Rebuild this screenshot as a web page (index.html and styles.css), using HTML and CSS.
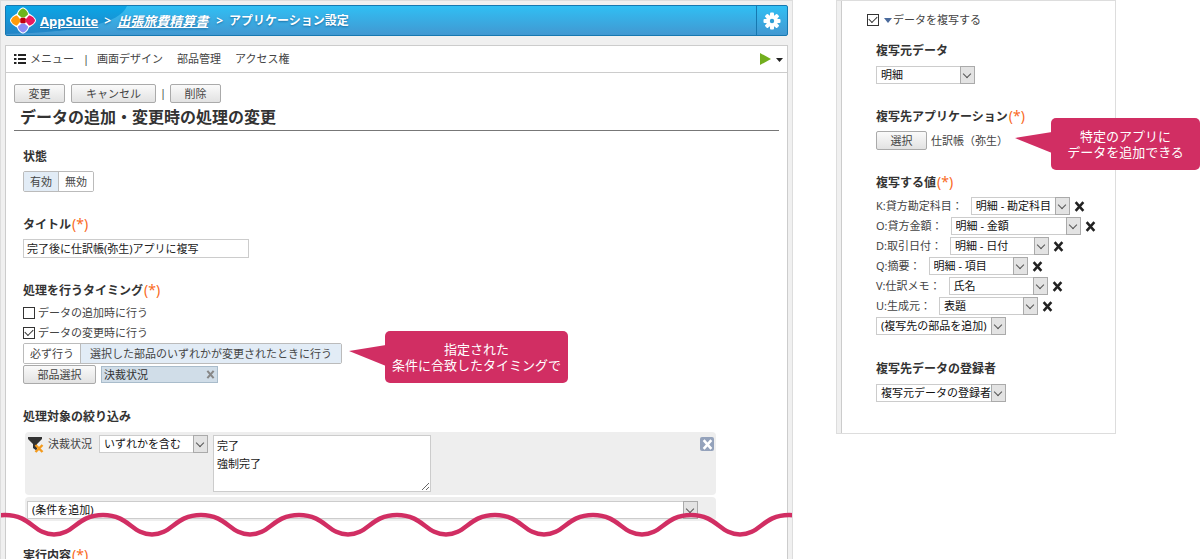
FILE: index.html
```html
<!DOCTYPE html>
<html lang="ja">
<head>
<meta charset="utf-8">
<title>AppSuite - アプリケーション設定</title>
<link rel="stylesheet" href="styles.css">
</head>
<body>
<svg class="defs" aria-hidden="true">
  <symbol id="cross" viewBox="0 0 10 10"><path d="M1.500 1L8.500 9M8.500 1L1.500 9" fill="none" stroke="currentColor" stroke-width="2.300"/></symbol>
</svg>
<div class="page">
  <main class="app">
    <header class="bar">
      <svg class="swoosh" viewBox="0 0 125 29" aria-hidden="true"><defs><linearGradient id="sw" x1="0" y1="0" x2="0" y2="1"><stop offset="0" stop-color="#0aa6e6"/><stop offset="1" stop-color="#2384c6"/></linearGradient></defs><path d="M0 0H121C114 18 72 26 0 28Z" fill="url(#sw)"/></svg>
      <svg class="logo" viewBox="0 0 26 27" aria-hidden="true">
        <path d="M13 .5C15 .5 18 3 19 6.500C23 8.500 26 11.500 26 13.500S23 18.500 19 20.500C18 24 15 26.500 13 26.500S8 24 7 20.500C3 18.500 0 15.500 0 13.500S3 8.500 7 6.500C8 3 11 .5 13 .5Z" fill="#fff"/>
        <path d="M13 1.500C15.500 2 18 5 18 7.500L14.500 10.500H11.500L8 7.500C8 5 10.500 2 13 1.500Z" fill="#6cb51d"/>
        <path d="M1 13.500C1.500 11 4.500 8.500 7 8.500L10 12V15L7 18.500C4.500 18.500 1.500 16 1 13.500Z" fill="#ff9b0b"/>
        <path d="M25 13.500C24.500 11 21.500 8.500 19 8.500L16 12V15L19 18.500C21.500 18.500 24.500 16 25 13.500Z" fill="#e8185f"/>
        <path d="M13 25.500C15.500 25 18 22 18 19.500L14.500 16.500H11.500L8 19.500C8 22 10.500 25 13 25.500Z" fill="#8c8cf5"/>
        <rect x="10.200" y="10.700" width="5.600" height="5.600" rx="1.500" fill="#c2000d"/>
      </svg>
      <nav class="crumbs"><a class="root" href="#">AppSuite</a><span>&gt;</span><a class="doc" href="#">出張旅費精算書</a><span class="next">&gt;</span><span>アプリケーション設定</span></nav>
      <button class="gear" type="button" aria-label="設定">
        <svg viewBox="-9 -9 18 18" width="18" height="18" aria-hidden="true"><g fill="#fff"><g id="teeth"><rect x="-2" y="-8.500" width="4" height="17" rx="1"/><rect x="-8.500" y="-2" width="17" height="4" rx="1"/></g><use href="#teeth" transform="rotate(45)"/><circle r="6"/></g><circle r="2.200" fill="#2e9fd6"/></svg>
      </button>
    </header>

    <div class="sheet">
      <div class="toolbar">
        <a class="menu" href="#"><svg width="12" height="10" viewBox="0 0 12 10" aria-hidden="true"><path d="M0 1H2.500M0 5H2.500M0 9H2.500M4 1H12M4 5H12M4 9H12" stroke="#222" stroke-width="2"/></svg>メニュー</a>
        <span class="sep">|</span>
        <a href="#">画面デザイン</a><a href="#">部品管理</a><a href="#">アクセス権</a>
        <button class="run" type="button" aria-label="実行"><svg width="23" height="12" viewBox="0 0 23 12" aria-hidden="true"><path d="M0 0L11 6L0 12Z" fill="#72ae1e"/><path d="M16 5H23L19.500 9Z" fill="#222"/></svg></button>
      </div>

      <div class="content">
        <div class="actions">
          <button class="btn" type="button">変更</button>
          <button class="btn long" type="button">キャンセル</button>
          <span class="sep">|</span>
          <button class="btn" type="button">削除</button>
        </div>
        <h1>データの追加・変更時の処理の変更</h1>

        <div class="form">
          <section>
            <h2>状態</h2>
            <div class="toggle"><button class="on" type="button">有効</button><button type="button">無効</button></div>
          </section>
          <section>
            <h2><label for="title">タイトル</label><span class="req">(*)</span></h2>
            <input id="title" class="text" type="text" value="完了後に仕訳帳(弥生)アプリに複写">
          </section>
          <section class="timing">
            <h2>処理を行うタイミング<span class="req">(*)</span></h2>
            <label class="check"><input type="checkbox">データの追加時に行う</label>
            <label class="check"><input type="checkbox" checked>データの変更時に行う</label>
            <div class="anchor">
              <div class="toggle wide"><button type="button">必ず行う</button><button class="on" type="button">選択した部品のいずれかが変更されたときに行う</button></div>
              <div class="callout left"><svg width="37" height="22" viewBox="0 0 37 22" aria-hidden="true"><path d="M0 6L37 0V21Z" fill="#d12e63"/></svg>指定された<br>条件に合致したタイミングで</div>
            </div>
            <div class="parts">
              <button class="btn parts-btn" type="button">部品選択</button>
              <span class="chip">決裁状況<button type="button" aria-label="外す"><svg width="9" height="9"><use href="#cross"/></svg></button></span>
            </div>
          </section>
          <section class="filter">
            <h2>処理対象の絞り込み</h2>
            <div class="cond">
              <svg class="funnel" width="16" height="16" viewBox="0 0 16 16" aria-hidden="true"><path d="M0 0H14V2L9 7V14L5 11V7L0 2Z" fill="#333"/><path d="M7.500 8L14.500 15M14.500 8L7.500 15" stroke="#f39a1c" stroke-width="2.400"/></svg>
              <label for="op">決裁状況</label>
              <span class="select op"><select id="op"><option>いずれかを含む</option></select></span>
              <textarea aria-label="決裁状況の値">完了
強制完了</textarea>
              <button class="remove" type="button" aria-label="条件を削除"><svg width="11" height="11"><use href="#cross"/></svg></button>
            </div>
            <div class="cond add"><span class="select"><select aria-label="条件を追加"><option>(条件を追加)</option></select></span></div>
          </section>
          <section>
            <h2>実行内容<span class="req">(*)</span></h2>
          </section>
        </div>
      </div>
    </div>
    <svg class="wave" width="100%" height="28" aria-hidden="true"><defs><pattern id="wv" x="5" width="98" height="28" patternUnits="userSpaceOnUse"><path d="M-2 4H0C26 4 29 23.500 49 23.500S72 4 98 4H100" fill="none" stroke="#d12e63" stroke-width="4.500"/></pattern></defs><rect width="100%" height="28" fill="url(#wv)"/></svg>
  </main>

  <aside class="side">
    <div class="side-body">
      <label class="check head"><input type="checkbox" checked><svg width="8" height="5" viewBox="0 0 8 5" aria-hidden="true"><path d="M0 0H8L4 5Z" fill="#4a6a9c"/></svg>データを複写する</label>
      <div class="fields">
        <section>
          <h2><label for="src">複写元データ</label></h2>
          <span class="select"><select id="src"><option>明細</option></select></span>
        </section>
        <section class="target">
          <h2>複写先アプリケーション<span class="req">(*)</span></h2>
          <div class="anchor pick">
            <button class="btn" type="button">選択</button><span>仕訳帳（弥生）</span>
            <div class="callout right"><svg width="37" height="22" viewBox="0 0 37 22" aria-hidden="true"><path d="M0 6L37 0V21Z" fill="#d12e63"/></svg>特定のアプリに<br>データを追加できる</div>
          </div>
        </section>
        <section class="values">
          <h2>複写する値<span class="req">(*)</span></h2>
          <div class="map"><label for="k">K:貸方勘定科目：</label><span class="select"><select id="k"><option>明細 - 勘定科目</option></select></span><button type="button" aria-label="削除"><svg width="11" height="11"><use href="#cross"/></svg></button></div>
          <div class="map"><label for="o">O:貸方金額：</label><span class="select large"><select id="o"><option>明細 - 金額</option></select></span><button type="button" aria-label="削除"><svg width="11" height="11"><use href="#cross"/></svg></button></div>
          <div class="map"><label for="d">D:取引日付：</label><span class="select"><select id="d"><option>明細 - 日付</option></select></span><button type="button" aria-label="削除"><svg width="11" height="11"><use href="#cross"/></svg></button></div>
          <div class="map"><label for="q">Q:摘要：</label><span class="select"><select id="q"><option>明細 - 項目</option></select></span><button type="button" aria-label="削除"><svg width="11" height="11"><use href="#cross"/></svg></button></div>
          <div class="map"><label for="v">V:仕訳メモ：</label><span class="select"><select id="v"><option>氏名</option></select></span><button type="button" aria-label="削除"><svg width="11" height="11"><use href="#cross"/></svg></button></div>
          <div class="map"><label for="u">U:生成元：</label><span class="select"><select id="u"><option>表題</option></select></span><button type="button" aria-label="削除"><svg width="11" height="11"><use href="#cross"/></svg></button></div>
          <div class="map"><span class="select large"><select aria-label="複写先の部品を追加"><option>(複写先の部品を追加)</option></select></span></div>
        </section>
        <section>
          <h2><label for="owner">複写先データの登録者</label></h2>
          <span class="select large"><select id="owner"><option>複写元データの登録者</option></select></span>
        </section>
      </div>
    </div>
  </aside>
</div>
</body>
</html>
```

FILE: styles.css
```css
*, *::before, *::after { box-sizing: border-box; }
body {
  margin: 0;
  background: #fff;
  color: #444;
  font: 11px/20px "Noto Sans", "Noto Sans CJK JP", sans-serif;
}
button, input, select, textarea { margin: 0; font: inherit; color: inherit; }
button { padding: 0; border: 0; background: none; }
a { color: inherit; text-decoration: none; }
svg { display: block; flex: none; }
.defs { position: absolute; width: 0; height: 0; }

.page { display: flex; align-items: flex-start; gap: 43px; padding-right: 84px; height: 100vh; overflow: hidden; }

/* Main window */
.app {
  position: relative;
  flex: 1;
  min-width: 0;
  height: 100vh;
  overflow: hidden;
  padding: 4px 4px 0;
  border: 1px solid #ddd;
  border-bottom: 0;
  background: #f0f0f0;
}
.bar {
  position: relative;
  display: flex;
  align-items: center;
  height: 31px;
  margin-bottom: 9px;
  padding-left: 4px;
  border: 1px solid #1678b0;
  border-radius: 2px;
  background: linear-gradient(#30bff4, #4298d1);
  color: #fff;
}
.swoosh { position: absolute; left: 0; top: 0; width: 125px; height: 29px; }
.logo { position: relative; width: 26px; height: 27px; margin-right: 4px; }
.crumbs { position: relative; display: flex; align-items: center; gap: 6px; flex: 1; font-weight: 700; font-size: 12px; text-shadow: 0 1px 2px #1a6fa5; }
.crumbs a { text-decoration: underline; }
.crumbs .root, .crumbs .doc { font-size: 13px; }
.crumbs .doc { font-style: italic; }
.crumbs .next { margin-left: 2px; }
.gear { display: grid; place-items: center; align-self: stretch; width: 31px; border-left: 1px solid #1678b0; }

.sheet { border: 1px solid #ccc; background: #fff; height: 100%; }
.toolbar { display: flex; align-items: center; gap: 14px; height: 27px; padding: 0 4px 0 8px; border-bottom: 1px solid #ccc; }
.menu { display: flex; align-items: center; gap: 4px; }
.toolbar .sep { margin: 0 -6px 0 -5px; }
.run { margin-left: auto; }

.content { padding: 10px 8px 0; }
.actions { display: flex; align-items: center; gap: 6px; }
.actions .sep { margin: 0 -2px; }
.btn {
  width: 51px;
  height: 19px;
  border: 1px solid #aaa;
  border-radius: 2px;
  background: linear-gradient(#fafafa, #e2e2e2);
  line-height: 17px;
  text-align: center;
}
.btn.long { width: 85px; }
h1 { margin: 0; padding: 2px 6px 1px; border-bottom: 1px solid #777; color: #333; font-size: 16px; line-height: 24px; }
h2 { margin: 0 0 4px; color: #333; font-size: 12px; line-height: 20px; }
.req { padding-left: 1px; color: #f96a24; font-weight: 400; font-size: 14px; line-height: 16px; }

.form { display: flex; flex-direction: column; gap: 23px; padding: 16px 9px 0; }
.toggle { display: inline-flex; height: 21px; border: 1px solid #bbb; border-radius: 2px; vertical-align: top; overflow: hidden; }
.toggle button { padding: 0 6px; line-height: 19px; background: #fff; }
.toggle button + button { border-left: 1px solid #bbb; }
.toggle .on { background: #e2ecf6; }
.toggle.wide { width: 319px; }
.toggle.wide .on { flex: 1; }
.text { display: block; width: 226px; height: 19px; padding: 0 3px; border: 1px solid #ccc; color: #222; }
.timing h2 { margin-bottom: 2px; }

.check { display: flex; align-items: center; gap: 3px; height: 20px; }
.check input { appearance: none; display: grid; place-items: center; flex: none; width: 12px; height: 12px; border: 1px solid #333; background: #fff; }
.check input:checked::after { content: ""; width: 8px; height: 5px; margin-bottom: 3px; border: solid #333; border-width: 0 0 1px 1px; rotate: -45deg; }

.anchor { position: relative; }
.timing .anchor { height: 22px; }
.callout { position: absolute; z-index: 1; padding: 10px 0; border-radius: 5px; background: #d12e63; color: #fff; font-size: 13px; line-height: 16px; text-align: center; white-space: nowrap; }
.callout svg { position: absolute; right: calc(100% - 1px); top: 14px; }
.callout.left { left: 362px; top: -12px; width: 183px; }
.callout.right { left: 175px; top: -13px; width: 149px; }

.parts { display: flex; align-items: center; gap: 5px; height: 19px; }
.parts-btn { width: 73px; }
.chip { display: flex; align-items: center; justify-content: space-between; width: 117px; height: 17px; padding: 0 2px; border: 1px solid #a9bccb; background: #d0dde8; color: #333; line-height: 15px; }
.chip button { color: #888; }

.select { position: relative; display: inline-flex; width: 99px; height: 18px; vertical-align: top; flex: none; }
.select select { appearance: none; width: 100%; height: 18px; padding: 0 14px 0 4px; border: 1px solid #ccc; border-radius: 0; background: #fff; color: #111; line-height: 16px; overflow: hidden; white-space: nowrap; }
.select::before { content: ""; position: absolute; right: 0; top: 0; width: 15px; height: 18px; border: 1px solid #aaa; background: #e3e3e3; pointer-events: none; }
.select::after { content: ""; position: absolute; right: 5px; top: 5px; width: 6px; height: 6px; border: solid #555; border-width: 0 1px 1px 0; rotate: 45deg; pointer-events: none; }
.select.large { width: 130px; }
.select.op { width: 109px; }

.filter h2 { margin-bottom: 5px; }
.cond { display: flex; align-items: flex-start; width: 691px; max-width: 100%; margin: 0 0 2px 2px; padding: 3px 2px; border-radius: 4px; background: #eee; }
.funnel { margin: 2px 4px 0 1px; }
.cond label { line-height: 18px; }
.cond .op { margin: 0 5px 0 7px; }
.cond textarea { width: 218px; height: 57px; padding: 1px 3px; border: 1px solid #ccc; background: #fff; color: #222; line-height: 18px; resize: both; }
.remove { display: grid; place-items: center; width: 14px; height: 14px; margin: 2px 0 0 auto; border-radius: 2px; background: #94a2bb; color: #fff; }
.cond.add { padding: 4px 18px 2px 2px; }
.cond.add .select { width: 100%; }

.wave { position: absolute; left: -1px; right: 0; bottom: 20px; width: calc(100% + 2px); }

/* Side window */
.side { width: 280px; padding-left: 4px; border: 1px solid #ddd; background: #f0f0f0; }
.side-body { padding: 9px 0 31px 25px; border-left: 1px solid #ccc; background: #fff; }
.check.head { gap: 1px; }
.check.head input { margin-right: 4px; }
.fields { display: flex; flex-direction: column; gap: 23px; padding: 11px 9px 0; }
.fields > section > .select { display: flex; }
.fields h2 { margin-bottom: 5px; }
.fields .target h2 { margin-bottom: 4px; }
.fields .values h2 { margin-bottom: 3px; }
.pick { display: flex; align-items: center; gap: 4px; height: 19px; }
.map { display: flex; align-items: center; height: 20px; }
.map label { margin-right: 8px; line-height: 18px; white-space: nowrap; }
.map button { margin-left: 4px; color: #222; }
```
